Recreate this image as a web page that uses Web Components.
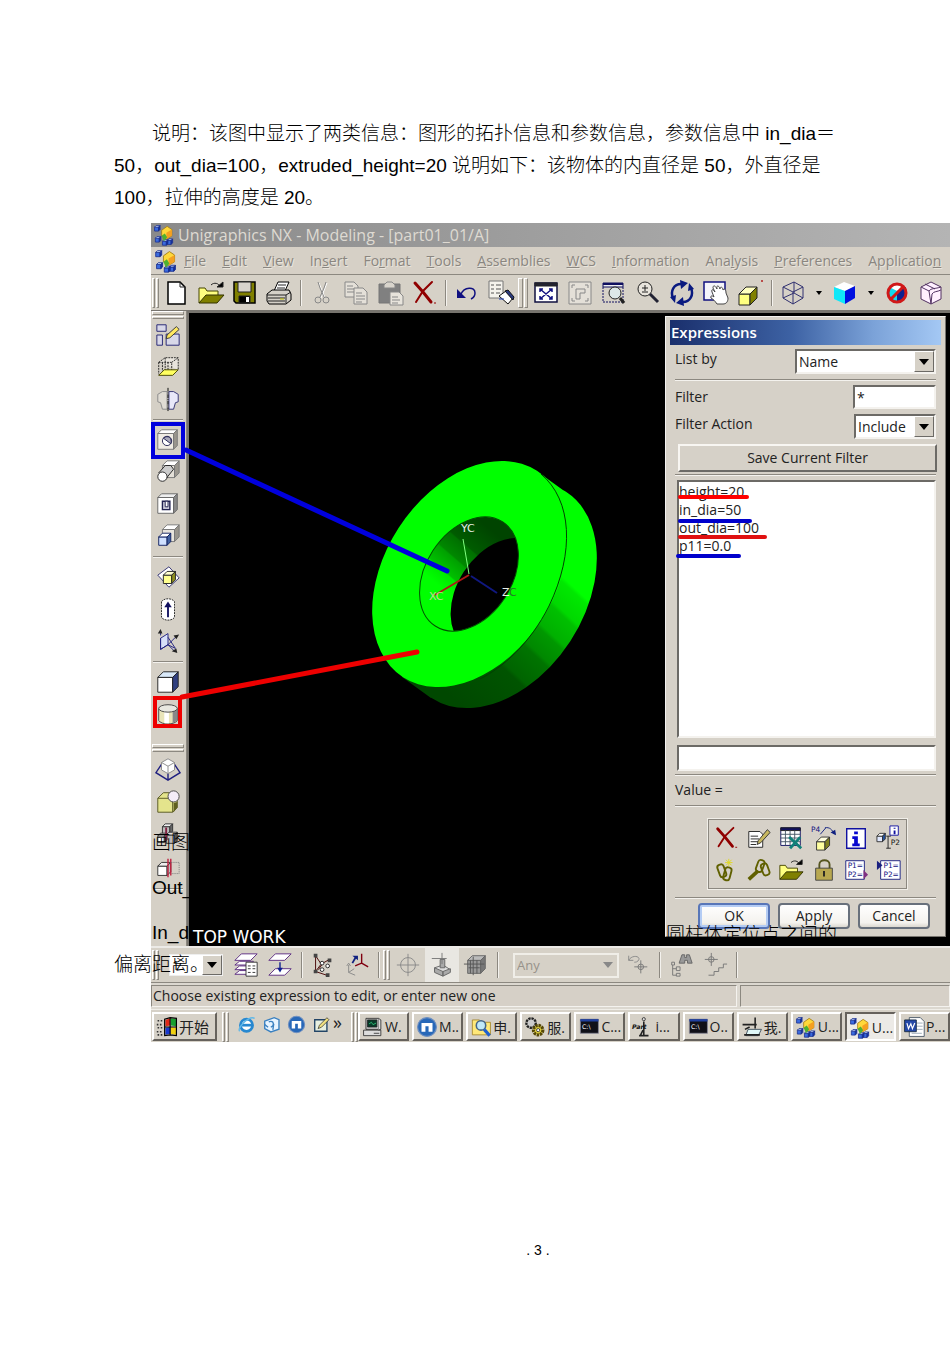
<!DOCTYPE html>
<html lang="zh-CN">
<head>
<meta charset="utf-8">
<title>Unigraphics NX - Modeling</title>
<style>
  body { margin: 0; background: #fff; color: #000; overflow-x: hidden; font-family: "Liberation Sans", "Noto Sans CJK SC", sans-serif; }
</style>
</head>
<body>
<doc-page>
  <p slot="intro">说明：该图中显示了两类信息：图形的拓扑信息和参数信息，参数信息中 in_dia＝<br>50，out_dia=100，extruded_height=20 说明如下：该物体的内直径是 50，外直径是<br>100，拉伸的高度是 20。</p>
  <nx-window slot="figure"></nx-window>
  <span slot="note-a">画图</span>
  <span slot="note-b">Out_</span>
  <span slot="note-c">In_d</span>
  <span slot="note-d">圆柱体定位点之间的</span>
  <span slot="note-e">偏离距离。</span>
  <span slot="number">. 3 .</span>
</doc-page>

<script>
const cube = (x, y, s, d, front = '#fff', top = '#eee', side = '#888', line = '#333') =>
  `<g stroke="${line}"><path fill="${front}" d="M${x} ${y + d}h${s}v${s}h${-s}z"/>` +
  `<path fill="${top}" d="M${x} ${y + d}l${d} ${-d}h${s}l${-d} ${d}z"/>` +
  `<path fill="${side}" d="M${x + s} ${y + d}l${d} ${-d}v${s}l${-d} ${d}z"/></g>`;
const blueBlock = (x, y) => cube(x, y, 5, 2, '#3a6be0', '#cfe0ff', '#1030a0', '#1a2f90');
const cross = (x, y, r, c) => `<g stroke="${c}"><circle cx="${x}" cy="${y}" r="${r}"/><path d="M${x - r - 4} ${y}h${2 * r + 8}M${x} ${y - r - 4}v${2 * r + 8}"/></g>`;
const folder = '<path fill="#ffff80" stroke="#444400" d="M2 24V9h6l2 3h11v4"/><path fill="#808000" stroke="#333300" d="M2 24l7-8h18l-7 8z"/><path d="M14 6c3-3 8-2 9 2"/><path fill="#000" d="M20 8h6V3z"/>';
const sheets = '<g fill="#fff" stroke="#5a2a80">';

const ICONS = {
  logo: blueBlock(2, 2) + blueBlock(3, 16) + blueBlock(18, 19) + blueBlock(12, 20) +
    '<path fill="#ffd83a" stroke="#a07810" d="M11 8l7-5 6 4v8l-7 4-6-4z"/><path fill="#f5a020" stroke="none" d="M17 11l7-4v8l-7 4z"/><path fill="#50b030" stroke="none" d="M11 15l4-3 3 5-4 5z"/>',
  new: '<path fill="#fff" stroke="#000" stroke-width="1.5" d="M5 3h12l5 5v17H5z"/><path d="M17 3v5h5"/>',
  open: folder,
  save: '<path fill="#808000" stroke="#000" stroke-width="1.5" d="M3 3h21v21H5l-2-2z"/><path fill="#d8d4cc" stroke="#222" d="M7 3h13v10H7z"/><path fill="#000" d="M8 17h11v7H8z"/><path fill="#fff" stroke="none" d="M15 18h3v5h-3z"/>',
  print: '<path fill="#fff" stroke="#000" d="M9 12l4-9h11l-4 9z"/><path d="M13 6h8M12 9h8"/><path fill="#d4d0c8" stroke="#000" d="M2 15l5-4h17l2 4v6l-5 4H4l-2-3z"/><path d="M2 16h19v8M21 16l5-3M3 19h17M3 22h17"/><path stroke="#c8c800" d="M15 20h4"/>',
  cut: '<g stroke="#fff" transform="translate(1 1)"><path d="M10 3l6 15M18 3l-6 15"/></g><g stroke="#888"><path d="M10 3l2 6 4 9M18 3l-2 6-4 9"/><circle cx="10" cy="21" r="3"/><circle cx="18" cy="21" r="3"/></g>',
  copy: '<g fill="#e4e0d8" stroke="#888"><path d="M3 3h9l4 4v11H3z"/><path d="M5 7h6M5 10h8M5 13h8"/><path d="M12 9h9l4 4v12H12z"/><path d="M14 14h6M14 17h9M14 20h9M14 23h6"/></g>',
  paste: '<path fill="#808080" stroke="#777" d="M3 5h21v19H3z"/><path fill="#d8d4cc" stroke="#888" d="M8 6l3-3h5l3 3v3H8z"/><path fill="#e8e4dc" stroke="#888" d="M14 13h9l4 4v9H14z"/><path stroke="#888" d="M16 18h6M16 21h8M16 24h6"/>',
  del: '<g stroke="#900000" stroke-linecap="round"><path stroke-width="3" d="M5 4l8 9 8 10"/><path stroke-width="2" d="M22 3l-9 9-7 11"/></g><path stroke="#900000" d="M24 24h2"/>',
  undo: '<path stroke="#101080" stroke-width="1.5" d="M8 15c3-7 14-8 14-1 0 3-2 5-4 6"/><path fill="#101080" stroke="none" d="M4 10v9h9z"/>',
  props: '<path fill="#f4f2ec" stroke="#777" d="M2 2h14v17H2z"/><path stroke="#555" d="M4 6h3M4 10h3M4 14h3M9 6h5M9 10h5M9 14h4"/><path fill="#fff" stroke="#111" d="M12 17l7-5 7 7-5 6z"/><path fill="#2a3a80" stroke="#111" d="M18 12l3-1 6 7-1 3z"/><path stroke="#2040c0" d="M12 20h5"/>',
  fit: '<path fill="#fff" stroke="#101040" stroke-width="1.5" d="M3 4h22v19H3z"/><path fill="#223" d="M3 4h22v3H3z"/><path stroke="#101080" stroke-width="1.5" d="M8 10l12 10M20 10L8 20M8 13v-3h3M17 10h3v3M20 17v3h-3M11 20H8v-3"/>',
  fitsel: '<path fill="#e4e0d8" stroke="#888" d="M3 3h22v22H3z"/><path stroke="#888" d="M6 9V6h3M19 6h3v3M22 19v3h-3M9 22H6v-3M10 20V10h9v4h-5v6z"/>',
  zoomwin: '<path fill="#eee" stroke="#101060" d="M3 4h20v4H3z"/><path fill="#101060" stroke="none" d="M3 4h20v2H3z"/><path stroke="#101060" stroke-dasharray="2 1" d="M3 8v15h20V8"/><circle cx="15" cy="14" r="6" fill="#dde8e8" stroke="#222"/><path stroke="#222" stroke-width="3" d="M20 19l4 5"/>',
  zoom: '<circle cx="11" cy="10" r="7" fill="#e8e4dc" stroke="#222"/><path stroke="#222" d="M8 9h6M11 6v6M8 13h6"/><path stroke="#223" stroke-width="3" d="M16 15l8 8"/>',
  rotate: '<g stroke="#0a1a80" stroke-width="2.5"><path d="M5 19C2 12 6 5 13 5M23 9c3 7-1 14-8 14"/></g><path fill="#0a1a80" stroke="none" d="M12 1l8 3-7 6zM16 27l-8-3 7-6zM20 12l1-8 5 6zM8 16l-1 8-5-6z"/>',
  pan: '<path fill="#f4f4fa" stroke="#101080" stroke-width="1.5" d="M2 3h21v18H2z"/><path fill="#fff" stroke="#444" d="M10 13c-1-3 1-3 3 0l-2-4c0-3 2-3 4 1-1-4 2-4 3 0 0-3 3-2 3 1 2-2 3 0 3 3l2 5c0 4-2 6-5 6h-6c-2-3-4-5-6-6-1-2 1-3 3-1z"/>',
  shade: cube(3, 8, 11, 7, '#ffff80', '#ffffc0', '#808000', '#222') + '<path stroke="#b02020" d="M25 2h2M26 1v2"/>',
  wire: '<g stroke="#303070"><path d="M4 8l11-5 9 5-10 5zM4 8v11l10 6 10-6V8M14 13v12M15 3v11L4 19M15 14l9 5"/></g>',
  solid: '<path fill="#fff" stroke="none" d="M3 8l10-5 11 4-10 5z"/><path fill="#10e8f8" stroke="none" d="M3 8l11 4v13L3 20z"/><path fill="#0010e0" stroke="none" d="M14 12l10-5v12l-10 6z"/>',
  noshade: '<path fill="#fff" stroke="none" d="M6 8l8-3 9 3-9 4z"/><path fill="#10d8f0" stroke="none" d="M6 8l8 4v11l-8-4z"/><path fill="#102090" stroke="none" d="M14 12l9-4v11l-9 4z"/><circle cx="14" cy="14" r="9" stroke="#d01818" stroke-width="3"/><path stroke="#d01818" stroke-width="3" d="M8 20L20 8"/>',
  edge: '<g stroke="#503060" fill="#fff0ff"><path d="M4 8l10-5 10 5v12l-10 5-10-5z"/><path d="M4 8l8 4 2 13M12 12c2-3 6-2 12-4M14 25l1-10c2-3 5-2 9-4M8 5l10 5"/></g>',
  sketch: '<g fill="#d8d8e8" stroke="#202070"><path d="M2 3h10v7H2zM2 14h6v11H2zM12 13h14v12H12z"/></g><path fill="#ffe860" stroke="#333" d="M13 14l10-9 3 3-10 9-4 1z"/>',
  extrude: '<g stroke="#222" stroke-dasharray="2 1"><path fill="#e8e4dc" d="M4 9l7-5h14v13"/><path d="M4 9h14v13M18 9l7-5M4 9v13M11 4v14M8 9v10M14 9v10"/></g><path fill="#ffff60" stroke="#444400" d="M4 23l6-6h15l-6 6z"/>',
  revolve: '<path fill="#e0dcd4" stroke="#888" d="M13 6H8L3 9v8l3 1 2 7h5z"/><path fill="#e8e8f8" stroke="#303070" d="M15 6h5l5 3v8l-3 1-2 7h-5z"/><path stroke="#000" stroke-dasharray="4 1 1 1" d="M14 2v25"/>',
  hole: cube(3, 3, 17, 4, '#f0ece4', '#fff', '#99958d', '#777') + '<circle cx="13" cy="15" r="5" fill="#fff" stroke="#202050"/><path fill="#aab" stroke="#202050" d="M9 12l8 6c2-6-3-10-8-6z"/>',
  boss: cube(8, 2, 13, 5, '#e4e0d8', '#fff', '#99958d', '#777') + '<path fill="#ccc" stroke="#222" d="M4 15l7-8h6l3 4-8 10z"/><circle cx="8" cy="19" r="5" fill="#fff" stroke="#222"/>',
  pocket: cube(3, 3, 17, 4, '#fff', '#eee', '#8a8a8a', '#666') + '<path fill="#c8c8d8" stroke="#202050" stroke-width="1.5" d="M8 11h8v9H8z"/><path fill="#fff" stroke="#202050" d="M11 11h3v6h-3z"/>',
  pad: cube(8, 2, 13, 5, '#e8e4dc', '#fff', '#99958d', '#777') + cube(4, 11, 9, 4, '#cfe0ff', '#fff', '#4060a0', '#102060'),
  datum: '<path fill="#fff" stroke="#303070" d="M3 12l12-9 11 12-11 10z"/>' + cube(9, 8, 9, 4, '#ffff90', '#ffffd0', '#909020', '#222'),
  axis: '<path fill="#fff" stroke="#222" stroke-dasharray="2 1" d="M7 6c3-4 11-4 14 0v17c-3 4-11 4-14 0z"/><path stroke="#101060" stroke-width="2" d="M14 23V10"/><path fill="#101060" stroke="none" d="M10 12l4-6 4 6z"/>',
  csys: '<g stroke="#202080"><path fill="#d8e0f8" d="M6 11l8-5v12l-8 5z"/><path d="M6 11v12l8-5 8 4-8-12M6 8V3M14 18l8-8M14 18l7 7"/></g><path fill="#222" stroke="none" d="M3 6l3-5 2 5zM20 8l6-1-3 5zM18 25l6 2-1-5z"/>',
  block: cube(3, 3, 16, 6, '#fff', '#d8e8f8', '#304080', '#222'),
  cylinder: '<path fill="#e8e4b8" stroke="#444" d="M4 8v13c3 5 17 5 20 0V8"/><path fill="#888" stroke="none" d="M19 11l5-3v13l-5 3z"/><path fill="#fff" stroke="none" d="M10 11h5v13h-5z"/><ellipse cx="14" cy="8" rx="10" ry="4" fill="#e8e8e0" stroke="#444"/>',
  taper: '<path stroke="#202080" stroke-width="1.5" d="M7 9l-6 9 13 8 13-8-6-9M14 13v13"/><path fill="#fff" stroke="#888" d="M7 7l7-4 7 4v8l-7 4-7-4z"/><path stroke="#888" d="M7 7l7 4 7-4M14 11v8"/>',
  blend: '<path fill="#e4e48c" stroke="#555520" d="M3 10l6-6h10l5 5v11l-5 5H3z"/><path stroke="#555520" d="M3 10h12l4 4v11"/><circle cx="20" cy="8" r="6" fill="#f4ecf8" stroke="#444"/><path fill="#606020" stroke="none" d="M20 15l4-1v6l-4 5z"/>',
  instance: cube(8, 2, 8, 3, '#bbb', '#eee', '#666') + cube(12, 11, 9, 3, '#bbb', '#ddd', '#555') + cube(3, 12, 7, 3, '#fff', '#eee', '#777') + '<path stroke="#802040" stroke-width="2" d="M12 6v14"/>',
  mirror: cube(3, 8, 10, 4, '#fff', '#eee', '#bbb') + '<path stroke="#c02040" stroke-width="1.5" d="M14 4v20M17 4v18"/><path stroke="#777" stroke-dasharray="1 1" d="M17 8h9v12h-9"/>',
  layers: sheets + '<path d="M2 9l7-7h17l-7 7z"/><path d="M2 14l5-4h15l-4 4zM2 19l5-4h12l-3 4zM2 24l5-4h10l-3 4z"/></g><path fill="#fff" stroke="#333" d="M14 11h12v15H14z"/><path stroke="#333" stroke-dasharray="3 2" d="M16 15h8M16 18h8M16 22h8"/>',
  movelayer: sheets + '<path d="M2 9l7-7h17l-7 7z"/><path d="M2 25l7-7h17l-7 7z"/></g><path stroke="#102090" stroke-width="1.5" d="M14 11v9"/><path fill="#102090" stroke="none" d="M11 17h6l-3 5z"/>',
  wcsorigin: '<g stroke="#400"><path d="M6 3v18l12 4M6 21l6-8 9-5M6 4l6 9M9 19l5-7"/></g><g fill="#444" stroke="none"><path d="M4 2h4v4H4zM4 19h4v4H4zM17 23h4v4h-4zM19 7h4v4h-4z"/></g><g fill="#fff"><circle cx="13" cy="12" r="2"/><circle cx="13" cy="19" r="2"/><circle cx="19" cy="15" r="2"/></g>',
  wcsrotate: '<path stroke="#888" d="M5 14v8l7 3M5 22l6-4M3 15l2-3 2 3"/><path stroke="#102080" stroke-width="2" d="M9 12l4-7"/><path fill="#102080" stroke="none" d="M9 4h6v5z"/><path stroke="#800010" stroke-width="1.5" d="M19 2v10l-7 3M19 12l7 4"/>',
  snap: cross(14, 14, 8, '#888'),
  placepart: '<path fill="#ddd" stroke="#666" d="M6 17l9-3 8 5-8 6-9-4z"/><path fill="#aaa" stroke="#666" d="M6 17l9 4v5l-9-4zM15 21l8-3v4l-8 4zM12 8h5v9h-5z"/><path stroke="#777" d="M3 7h16M14 1v12"/>',
  gridcube: cube(5, 4, 14, 5, '#999', '#bbb', '#777', '#666') + '<path stroke="#555" d="M1 13h22M11 5v20M6 17h12M8 9v14M15 9v14"/>',
  undopoint: '<path stroke="#888" d="M4 4v5h5M4 9c3-6 12-5 11-1-1 3-4 3-5 3"/>' + cross(17, 16, 3, '#777'),
  find: '<path fill="#999" stroke="#666" d="M12 12l3-9h3v3h2V3h3l3 9h-5V9h-3v3z"/><path stroke="#777" d="M4 11h3v3H4zM5 14v11h4M5 18h4M9 16h4v4H9zM9 23h4v3H9z"/>',
  steps: cross(10, 8, 3, '#777') + '<path stroke="#777" d="M7 25h6v-4h5v-4h5v-4h4"/>',
  editnote: '<path fill="#fff" stroke="#222" d="M3 7h12l3 3v14H3z"/><path d="M5 12h8M5 15h9M5 18h9M5 21h6"/><path fill="#c8b860" stroke="#333" d="M13 17L23 5l3 3-10 11-4 2z"/>',
  sheet: '<path fill="#fff" stroke="#101060" d="M3 3h21v19H3z"/><path fill="#101060" d="M3 3h21v3H3z"/><path stroke="#456" d="M8 6v16M13 6v16M18 6v16M3 10h21M3 14h21M3 18h21"/><path stroke="#108078" stroke-width="3" d="M12 13l13 12M24 13L13 25"/>',
  p4: cube(6, 13, 9, 5, '#ffffa0', '#ffffe0', '#808020') + '<path stroke="#102080" d="M10 10l6-7M15 3c5-1 8 2 10 7"/><path fill="#102080" stroke="none" d="M21 8l6 3-1-6z"/><text x="0" y="8" class="t">P4</text>',
  info: '<path fill="#fff" stroke="#1010a0" stroke-width="1.5" d="M4 4h20v21H4z"/><path fill="#0808d0" stroke="none" d="M12 7h4v3h-4zM10 12h6v8h2v3h-8v-3h2v-5h-2z"/>',
  infop2: '<path fill="#fff" stroke="#1010a0" d="M15 1h9v10h-9z"/><path stroke="#1010a0" stroke-width="2" d="M20 3v1M20 6v4"/>' + cube(1, 9, 6, 3, '#e0e8ff', '#fff', '#2050a0') + '<path d="M11 12h5M11 25h5M13 12v13"/><text x="16" y="22" class="t k">P2</text>',
  link: '<g stroke="#606000" stroke-width="2"><rect x="6" y="8" width="7" height="14" rx="3" transform="rotate(-20 9 15)"/><rect x="12" y="11" width="7" height="14" rx="3" transform="rotate(15 15 18)"/></g><path stroke="#e0d820" d="M17 2v8M13 6h8M14 3l6 6M20 3l-6 6"/>',
  links: '<g stroke="#606000" stroke-width="2"><rect x="12" y="3" width="7" height="13" rx="3" transform="rotate(20 15 9)"/><rect x="17" y="7" width="7" height="13" rx="3" transform="rotate(-20 20 13)"/><path stroke-width="4" d="M3 24l10-9"/></g>',
  lock: '<path stroke="#555520" stroke-width="2" d="M9 13V8c0-6 11-6 11 0v5"/><path fill="#b8a850" stroke="#444" d="M5 12h18v13H5z"/><path stroke="#222" stroke-width="2" d="M14 15v6"/>',
  pout: '<path fill="#fff" stroke="#1a2080" d="M3 4h20v20H3z"/><path fill="#803080" stroke="none" d="M22 14l5 5-5 5z"/><text x="5" y="12" class="t">P1=</text><text x="5" y="21" class="t">P2=</text>',
  pin: '<path fill="#fff" stroke="#1a2080" d="M5 4h21v20H5z"/><path fill="#1a2080" stroke="none" d="M1 4l6 5-6 5z"/><text x="8" y="12" class="t">P1=</text><text x="8" y="21" class="t">P2=</text>',
  winflag: '<g stroke="none"><path fill="#e02818" d="M12 5l6-2v9l-6 1z"/><path fill="#18a030" d="M19 3l7 1v9l-7-1z"/><path fill="#1838d0" d="M12 15l6-1v9l-6 1z"/><path fill="#f0d010" d="M19 14l7 1v9l-7-1z"/></g><path stroke="#000" stroke-width="1.5" d="M11 4v21l7-1 8 1V3l-8-1zM18 3v21M11 14h15"/><path stroke="#333" stroke-width="2" stroke-dasharray="2 2" d="M2 6h8M1 11h8M2 15h8M1 20h8M2 24h8"/>',
  ie: '<circle cx="14" cy="15" r="9" fill="#fff" stroke="#2888d0" stroke-width="4"/><path stroke="#2888d0" stroke-width="4" d="M6 15h17"/><path stroke="#60b8e8" stroke-width="2" d="M4 24C-1 20 18 0 26 5"/>',
  mail: '<path fill="#e8f4ff" stroke="#3a80c0" stroke-width="2" d="M4 9l14-5 7 3v14l-12 4-9-5z"/><path stroke="#3a80c0" stroke-width="2" d="M10 10c6-2 8 2 6 6M13 18l4-3-1 7M4 14l5 4"/>',
  maxthon: '<circle cx="14" cy="14" r="12" fill="#2868b8" stroke="#7090c0" stroke-width="1.5"/><path fill="#fff" stroke="none" d="M7 9h14v11h-5v-7h-4v7H7z"/>',
  desk: '<path fill="#e8f0e0" stroke="#246" stroke-width="2" d="M4 7h18v17H4z"/><path fill="#f0e080" stroke="#222" d="M9 20l2-5L22 4l3 3-11 11z"/>',
  computer: '<path fill="#c8c8c8" stroke="#222" d="M5 3h16v14H5z"/><path fill="#083828" d="M7 5h12v9H7z"/><path stroke="#30d080" d="M9 10l3-2 2 3 4-2"/><path fill="#ddd" stroke="#222" d="M2 18h22v7H2zM21 3l3 2v12l-3 1"/><path d="M15 22h7"/>',
  search: '<path fill="#ffe878" stroke="#a08020" d="M3 5h9l2 3h12v16H3z"/><circle cx="14" cy="12" r="6" fill="#c0e8f8" stroke="#468" stroke-width="2"/><path stroke="#2060d0" stroke-width="4" d="M18 17l7 8"/>',
  gears: '<g stroke="#222"><circle cx="9" cy="9" r="6" fill="#ccc" stroke-dasharray="3 1" stroke-width="3"/><circle cx="18" cy="18" r="6" fill="#e0d040" stroke="#554808" stroke-dasharray="3 1" stroke-width="4"/><circle cx="18" cy="18" r="2" fill="#fff"/></g>',
  cmd: '<path fill="#101018" stroke="#889" d="M3 4h23v18H3z"/><path fill="#2040a0" stroke="none" d="M3 4h23v3H3z"/><text x="5" y="17" class="t w">C:\\</text>',
  part: '<circle cx="15" cy="4" r="2" fill="#ddd"/><path stroke="#222" stroke-width="2" d="M15 7v18M9 25h12M14 18l-3 6"/><text x="0" y="17" class="t k b">Part</text>',
  mypc: '<path fill="#e0f8f8" stroke="#234" d="M9 17h17l-4 8H6z"/><path stroke="#222" stroke-width="2" d="M2 11h18M18 2v14M5 17l6-3M4 24h20"/>',
  word: '<path fill="#fff" stroke="#345" d="M8 2h14l5 5v19H8z"/><path stroke="#89a" d="M17 9h8M17 13h8M17 17h8M11 22h13"/><path fill="#2448a8" stroke="#123" d="M2 5h15v15H2z"/><path stroke="#fff" stroke-width="1.5" d="M5 9l2 7 3-6 2 6 3-7"/>'
};

const define = (name, html, setup) => customElements.define(name, class extends HTMLElement {
  static observedAttributes = ['name'];
  constructor() {
    super();
    const root = this.attachShadow({ mode: 'open' });
    const tpl = document.createElement('template');
    tpl.innerHTML = html;
    root.append(tpl.content.cloneNode(true));
  }
  connectedCallback() { if (setup) setup.call(this, this.shadowRoot); }
  attributeChangedCallback() { if (setup && this.isConnected) setup.call(this, this.shadowRoot); }
});

define('nx-icon', `<style>
  :host { display: inline-flex; flex: none; width: var(--icon, 28px); height: var(--icon, 28px); }
  svg { width: 100%; height: 100%; overflow: visible; }
  .t { font: 8px "DejaVu Sans", sans-serif; fill: #101080; stroke: none; }
  .k { fill: #111; } .w { fill: #fff; } .b { font-weight: bold; font-style: italic; }
</style><svg viewBox="0 0 28 28" fill="none" stroke="#222" aria-hidden="true"></svg>`,
function (root) { root.querySelector('svg').innerHTML = ICONS[this.getAttribute('name')] || ''; });

define('tool-button', `<style>
  :host { display: flex; flex: none; width: var(--tool-w, 34px); height: var(--tool-h, 34px); }
  button { flex: 1; display: flex; align-items: center; justify-content: center; padding: 0; border: 0; background: none; }
  :host([active]) button { background: #e9e7e2; }
</style><button type="button"><nx-icon></nx-icon></button>`,
function (root) {
  const n = this.getAttribute('name');
  root.querySelector('nx-icon').setAttribute('name', n);
  root.querySelector('button').setAttribute('aria-label', n);
});

define('tool-drop', `<style>
  :host { display: flex; flex: none; width: 18px; }
  button { flex: 1; padding: 0; border: 0; background: none; display: flex; align-items: center; justify-content: center; }
</style><button type="button" aria-label="more"><svg width="6" height="4"><path d="M0 0h6L3 4z"/></svg></button>`);

define('tool-sep', `<style>
  :host { display: block; flex: none; width: 9px; height: 26px; }
  i { display: block; width: 1px; height: 100%; margin-left: 4px; background: #8c8880; border-right: 1px solid #f4f2ee; }
  :host([wide]) { width: 100%; height: 9px; }
  :host([wide]) i { width: auto; height: 1px; margin: 4px 3px 0 2px; border: 0; border-bottom: 1px solid #f4f2ee; }
</style><i></i>`);

define('tool-grip', `<style>
  :host { display: flex; flex: none; gap: 1px; width: 7px; height: 30px; }
  i { flex: 1; border: 1px solid; border-color: #fff #8c8880 #8c8880 #fff; }
  :host([wide]) { flex-direction: column; width: 32px; height: 8px; margin-left: 1px; }
</style><i></i><i></i>`);

define('nx-menu', `<style>
  :host { display: flex; align-items: center; gap: 16px; height: 27px; padding-left: 3px; background: #d6d0c6; color: #8a8680; font-size: 14px; white-space: nowrap; overflow: hidden; --icon: 24px; }
  nx-icon { margin-right: -10px; }
  a { color: inherit; text-decoration: none; text-shadow: 1px 1px #e9e5dd; }
</style><nx-icon name="logo"></nx-icon>
<a href="#"><u>F</u>ile</a><a href="#"><u>E</u>dit</a><a href="#"><u>V</u>iew</a><a href="#">In<u>s</u>ert</a><a href="#">Fo<u>r</u>mat</a><a href="#"><u>T</u>ools</a><a href="#"><u>A</u>ssemblies</a><a href="#"><u>W</u>CS</a><a href="#"><u>I</u>nformation</a><a href="#">Ana<u>l</u>ysis</a><a href="#"><u>P</u>references</a><a href="#">Applicatio<u>n</u></a>`);

const tools = names => names.split(' ').map(n =>
  n === '|' ? '<tool-sep></tool-sep>' : n === 'v' ? '<tool-drop></tool-drop>' :
  n === '#' ? '<tool-grip></tool-grip>' : n === '-' ? '<tool-sep wide></tool-sep>' :
  n === '=' ? '<tool-grip wide></tool-grip>' : `<tool-button name="${n}"></tool-button>`).join('');

define('nx-toolbar', `<style>
  :host { display: flex; align-items: center; height: 36px; box-sizing: border-box; padding-left: 1px; background: #d6d1c7; border-top: 1px solid #8c8880; overflow: hidden; }
  tool-grip:not(:first-of-type) { width: 10px; }
  tool-grip { margin-right: 1px; }
</style>${tools('# new open save print | cut copy paste del | undo props # fit fitsel zoomwin zoom rotate pan shade | wire v solid v noshade edge')}`);

define('nx-sidebar', `<style>
  :host { display: flex; flex-direction: column; flex: none; width: 36px; box-sizing: border-box; background: #d5d0c6; border-right: 1px solid #8c8880; --tool-w: 34px; --tool-h: 32px; --icon: 26px; }
  .lower { margin-top: 14px; --tool-h: 33px; }
</style>${tools('= sketch extrude revolve - hole boss pocket pad - datum axis csys - block cylinder')}
<div class="lower">${tools('= taper blend instance mirror -')}</div>`);

define('part-view', `<style>
  :host { display: flex; flex: 1; position: relative; background: #000; overflow: hidden; align-items: flex-end; }
  svg { position: absolute; left: 0; top: 0; }
  text { font: 11px "DejaVu Sans", sans-serif; fill: #e8f0e8; }
  span { position: relative; padding: 0 0 0 4px; color: #fff; font: 17px/18px "DejaVu Sans", sans-serif; white-space: nowrap; }
</style>
<svg width="761" height="633" viewBox="189 313 761 633" role="img" aria-label="ring">
  <defs>
    <linearGradient id="side" gradientUnits="userSpaceOnUse" x1="600" y1="575" x2="470" y2="715">
      <stop offset="0" stop-color="#0f0"/><stop offset=".14" stop-color="#0f0"/><stop offset=".16" stop-color="#00e800"/>
      <stop offset=".27" stop-color="#00d800"/><stop offset=".29" stop-color="#00c000"/><stop offset=".4" stop-color="#00b000"/>
      <stop offset=".42" stop-color="#009800"/><stop offset=".52" stop-color="#008800"/><stop offset=".54" stop-color="#007400"/>
      <stop offset=".68" stop-color="#006400"/><stop offset=".7" stop-color="#005400"/><stop offset="1" stop-color="#004800"/>
    </linearGradient>
    <linearGradient id="bore" gradientUnits="userSpaceOnUse" x1="432" y1="580" x2="482" y2="522">
      <stop offset="0" stop-color="#0f0"/><stop offset=".18" stop-color="#00e800"/><stop offset=".2" stop-color="#00c000"/>
      <stop offset=".4" stop-color="#00a000"/><stop offset=".42" stop-color="#008800"/><stop offset=".62" stop-color="#007000"/>
      <stop offset=".64" stop-color="#005c00"/><stop offset="1" stop-color="#004400"/>
    </linearGradient>
    <clipPath id="mouth"><ellipse cx="469" cy="574" rx="62" ry="43" transform="rotate(-57 469 574)"/></clipPath>
    <clipPath id="back"><ellipse cx="499" cy="595" rx="123" ry="85" transform="rotate(-57 499 595)"/><path d="M538 472L567 493 431 698 402 677z"/></clipPath>
  </defs>
  <path fill="url(#side)" clip-path="url(#back)" d="M360 450h260v270H360z"/>
  <ellipse cx="470" cy="574" rx="123" ry="85" fill="#0f0" transform="rotate(-57 470 574)"/>
  <path d="M541 474C572 500 575 552 549 606C530 644 502 668 480 679" fill="none" stroke="#004000"/>
  <g clip-path="url(#mouth)">
    <path fill="url(#bore)" d="M400 500h140v150H400z"/>
    <ellipse cx="500" cy="595" rx="62" ry="43" transform="rotate(-57 500 595)"/>
  </g>
  <ellipse cx="469" cy="574" rx="62" ry="43" fill="none" stroke="#005000" transform="rotate(-57 469 574)"/>
  <path stroke="#80ff80" d="M463 539l6 35"/><path stroke="#b01818" stroke-width="2" d="M469 575l-34 20"/><path stroke="#101880" stroke-width="2" d="M471 576l26 17"/>
  <text x="461" y="532">YC</text><text x="429" y="600" style="fill:#c0d890">XC</text><text x="502" y="596">Z</text><text x="509" y="596" style="fill:#28702c">C</text>
</svg>
<span>TOP WORK</span>`);

define('pick-list', `<style>
  :host { display: flex; position: relative; box-sizing: border-box; height: 25px; background: #fff; border: 2px solid; border-color: #6c6a66 #f4f2ee #f4f2ee #6c6a66; }
  select { flex: 1; width: 100%; appearance: none; border: 0; background: none; padding: 0 20px 0 2px; font: inherit; color: inherit; }
  .arrow { position: absolute; right: 0; top: 0; bottom: 0; width: 18px; display: flex; align-items: center; justify-content: center; background: #d6d1c7; border: 1px solid; border-color: #fff #6c6a66 #6c6a66 #fff; pointer-events: none; }
  :host([off]) { background: none; border-color: #f0eee8; }
  :host([off]) select { color: #96928a; }
  :host([off]) .arrow { border: 0; background: none; fill: #888; }
</style><select><option></option></select><span class="arrow"><svg width="10" height="6"><path d="M0 0h10L5 6z"/></svg></span>`,
function (root) {
  root.querySelector('option').textContent = this.getAttribute('value');
  root.querySelector('select').setAttribute('aria-label', this.getAttribute('label'));
});

define('expr-dialog', `<style>
  :host { display: block; width: 281px; height: max-content; box-sizing: border-box; padding: 3px 4px; background: #d6d1c8; border: 1px solid; border-color: #f4f2f0 #77746e #77746e #f4f2f0; color: #222; font-size: 14px; line-height: 18px; }
  h2 { margin: 0; padding-left: 1px; font-size: 15px; line-height: 25px; font-weight: 600; color: #fff; background: linear-gradient(90deg, #1a2f6c, #3d62a4 45%, #7ba2d8 75%, #a4c8f4); }
  .body { padding: 4px 5px 4px; }
  .row { display: flex; justify-content: space-between; margin-bottom: 5px; }
  .row label { line-height: 20px; }
  .row.filter label { line-height: 24px; }
  hr { margin: 0 0 4px; border: 0; border-top: 1px solid #8c8880; border-bottom: 1px solid #f4f2ee; }
  input { box-sizing: border-box; height: 24px; border: 2px solid; border-color: #6c6a66 #f4f2ee #f4f2ee #6c6a66; background: #fff; padding: 0 2px; font: inherit; color: inherit; border-radius: 0; }
  .save { display: block; width: 259px; height: 28px; margin: 0 0 2px 3px; border: 2px solid; border-color: #f8f6f2 #6c6a66 #6c6a66 #f8f6f2; background: #d6d1c8; font: inherit; color: inherit; padding: 0; }
  ul { position: relative; list-style: none; margin: 0 0 7px 2px; min-height: 253px; padding: 1px 0 0; background: #fff; border: 2px solid; border-color: #6c6a66 #f4f2ee #f4f2ee #6c6a66; }
  ul svg { position: absolute; left: -3px; top: 0; overflow: visible; }
  .entry { display: block; width: calc(100% - 2px); margin: 0 0 3px 2px; height: 26px; }
  .value { margin: 0 0 5px; line-height: 20px; }
  .icons { width: 199px; box-sizing: border-box; margin: 12px auto 8px 33px; padding: 2px 1px; display: grid; grid-template-columns: repeat(6, 1fr); border: 1px solid #8c8880; outline: 1px solid #f0eee8; --tool-w: 32px; --tool-h: 32px; --icon: 26px; }
  .actions { display: flex; gap: 8px; margin: 0 6px 0 auto; width: max-content; }
  .actions button { width: 72px; height: 26px; border: 2px solid #68707c; border-radius: 4px; background: linear-gradient(#fff, #f4f2ee 80%, #dcd8d0); font: inherit; color: inherit; padding: 0; }
  .actions button:first-child { border-color: #5876b8; box-shadow: inset 0 0 0 2px #b4ccf4; }
</style>
<h2>Expressions</h2>
<div class="body">
  <div class="row"><label>List by</label><pick-list label="List by" value="Name" style="width:141px"></pick-list></div>
  <hr>
  <div class="row filter"><label for="f">Filter</label><input id="f" value="*" style="width:83px"></div>
  <div class="row"><label>Filter Action</label><pick-list label="Filter Action" value="Include" style="width:82px"></pick-list></div>
  <button class="save" type="button">Save Current Filter</button>
  <hr>
  <ul role="listbox" aria-label="Expressions">
    <li role="option">height=20</li><li role="option">in_dia=50</li><li role="option">out_dia=100</li><li role="option">p11=0.0</li>
    <svg width="100" height="80" stroke-width="4" stroke-linecap="round"><path stroke="#f00" d="M4 15h67"/><path stroke="#00c" d="M4 39h70"/><path stroke="#e01010" d="M4 55h85"/><path stroke="#00c" d="M2 74h61"/></svg>
  </ul>
  <input class="entry" aria-label="Expression">
  <hr>
  <p class="value">Value =</p>
  <hr>
  <div class="icons">${tools('del editnote sheet p4 info infop2 link links open lock pout pin')}</div>
  <hr>
  <div class="actions"><button type="button">OK</button><button type="button">Apply</button><button type="button">Cancel</button></div>
</div>`);

define('nx-selectbar', `<style>
  :host { display: flex; align-items: center; height: 37px; box-sizing: border-box; padding-left: 1px; background: #d6d1c7; border-top: 2px solid #eceae6; border-bottom: 1px solid #8c8880; font-size: 13px; overflow: hidden; --icon: 26px; }
  .layer { width: 54px; height: 22px; margin: 0 6px 0 9px; border-width: 1px; border-color: #eee; }
  .any { width: 106px; margin: 0 2px 0 11px; }
  tool-grip { margin-right: 1px; }
</style><tool-grip></tool-grip><pick-list class="layer" label="Work layer" value="1"></pick-list>
${tools('layers movelayer | wcsorigin wcsrotate | #')}<tool-button name="snap"></tool-button><tool-button name="placepart" active></tool-button>${tools('gridcube |')}
<pick-list class="any" off label="Type" value="Any"></pick-list>${tools('undopoint | find steps |')}`);

define('nx-status', `<style>
  :host { display: flex; gap: 3px; height: 26px; box-sizing: border-box; padding: 2px 0; background: #dcd8d0; color: #222; font-size: 14px; line-height: 20px; white-space: nowrap; }
  div { box-sizing: border-box; background: #d6d0c7; border: 1px solid; border-color: #8c8880 #f4f2ee #f4f2ee #8c8880; }
  .msg { width: 586px; padding-left: 1px; } .rest { flex: 1; }
</style><div class="msg" role="status">Choose existing expression to edit, or enter new one</div><div class="rest"></div>`);

define('task-button', `<style>
  :host { display: flex; flex: 1; min-width: 0; height: 29px; --icon: 22px; }
  button { flex: 1; min-width: 0; display: flex; align-items: center; gap: 1px; padding: 0 0 0 2px; border: 2px solid; border-color: #fff #66625c #66625c #fff; background: #d6d1c7; color: #222; font: inherit; overflow: hidden; white-space: nowrap; }
  :host([pressed]) button { border-color: #66625c #fff #fff #66625c; background: #eceae6; padding-top: 2px; }
</style><button type="button"><nx-icon></nx-icon><slot></slot></button>`,
function (root) { root.querySelector('nx-icon').setAttribute('name', this.getAttribute('icon')); });

const tasks = [['computer', 'W.'], ['maxthon', 'M..'], ['search', '申.'], ['gears', '服.'], ['cmd', 'C...'], ['part', 'i...'], ['cmd', 'O..'], ['mypc', '我.'], ['logo', 'U...'], ['logo', 'U...', 'pressed'], ['word', 'P...']];
define('nx-taskbar', `<style>
  :host { display: flex; align-items: flex-start; height: 33px; box-sizing: border-box; padding: 2px 0 0 1px; background: #d6d1c7; border-top: 1px solid #f0eee8; color: #222; font-size: 14px; overflow: hidden; }
  .start { flex: none; width: 65px; margin-right: 5px; font-size: 15px; }
  .quick { display: flex; width: 97px; --tool-w: 25px; --tool-h: 25px; --icon: 19px; margin-left: 5px; }
  .more { width: 14px; margin: 0 4px 0 2px; font-size: 18px; line-height: 20px; }
  .tasks { flex: 1; min-width: 0; display: flex; gap: 3px; }
</style><task-button class="start" icon="winflag">开始</task-button><tool-grip></tool-grip>
<div class="quick">${tools('ie mail maxthon desk')}</div><span class="more">»</span><tool-grip></tool-grip>
<div class="tasks">${tasks.map(([i, t, p = '']) => `<task-button icon="${i}" ${p}>${t}</task-button>`).join('')}</div>`);

define('nx-window', `<style>
  :host { display: block; position: relative; overflow: hidden; font-family: "Open Sans", "Noto Sans CJK SC", sans-serif; }
  header { display: flex; align-items: center; gap: 3px; height: 24px; padding-left: 2px; background: linear-gradient(90deg, #8a8a8a, #b4b4b4); color: #dedad2; font-size: 16px; white-space: nowrap; --icon: 22px; }
  .main { display: flex; position: relative; height: 636px; box-sizing: border-box; border-top: 1px solid #77746e; }
  part-view { border: solid #77746e; border-width: 2px 0 0 2px; }
  .marks { position: absolute; left: 0; top: 0; pointer-events: none; }
  expr-dialog { position: absolute; right: 4px; top: 5px; }
</style>
<header><nx-icon name="logo"></nx-icon><span>Unigraphics NX - Modeling - [part01_01/A]</span></header>
<nx-menu></nx-menu>
<nx-toolbar></nx-toolbar>
<div class="main"><nx-sidebar></nx-sidebar><part-view></part-view>
  <svg class="marks" width="320" height="430" viewBox="151 311 320 430" fill="none">
    <path stroke="#00d" stroke-width="4" d="M153 424h30v33h-30z"/><path stroke="#00d" stroke-width="5" stroke-linecap="round" d="M186 450L447 571"/>
    <path stroke="#e00" stroke-width="4" d="M155 698h25v28h-25z"/><path stroke="#e00" stroke-width="5" stroke-linecap="round" d="M182 697L417 652"/>
  </svg>
  <expr-dialog></expr-dialog>
</div>
<nx-selectbar></nx-selectbar>
<nx-status></nx-status>
<nx-taskbar></nx-taskbar>`);

define('doc-page', `<style>
  :host { display: block; box-sizing: border-box; padding: 118px 0 83px 114px; font-size: 19px; line-height: 32px; font-weight: 300; }
  ::slotted(p) { margin: 0 0 9px; text-indent: 38px; white-space: nowrap; }
  figure { position: relative; margin: 0 0 196px 37px; font-weight: 400; line-height: normal; }
  .over { position: absolute; white-space: nowrap; line-height: 20px; font-weight: 300; }
  .a { left: 1px; top: 610px; } .b { left: 1px; top: 655px; } .c { left: 1px; top: 700px; }
  .d { left: 515px; top: 702px; clip-path: inset(0 0 6px 0); } .e { left: -37px; top: 732px; }
  footer { padding-left: 12px; text-align: center; font-size: 14px; line-height: 24px; }
</style>
<slot name="intro"></slot>
<figure><slot name="figure"></slot>
  <span class="over a"><slot name="note-a"></slot></span><span class="over b"><slot name="note-b"></slot></span><span class="over c"><slot name="note-c"></slot></span><span class="over d"><slot name="note-d"></slot></span><span class="over e"><slot name="note-e"></slot></span>
</figure>
<footer><slot name="number"></slot></footer>`);
</script>
</body>
</html>
